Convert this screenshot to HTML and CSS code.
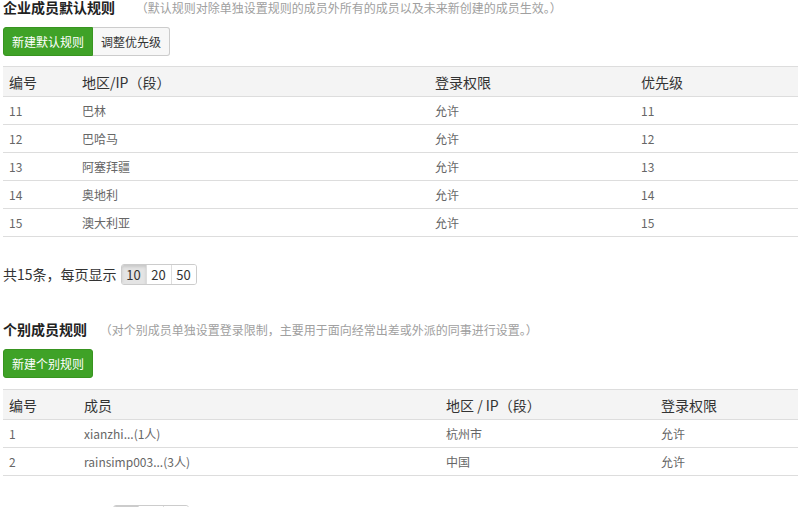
FILE: index.html
```html
<!DOCTYPE html>
<html>
<head>
    <meta charset="utf-8">
    <title>登录限制</title>
    <link rel="stylesheet" href="styles.css">
</head>
<body>
    <div class="page">
        <div class="section">
            <div class="section-title">
                <span class="title">企业成员默认规则</span>
                <span class="note note-wide">（默认规则对除单独设置规则的成员外所有的成员以及未来新创建的成员生效。）</span>
            </div>
            <div class="toolbar">
                <span class="btn btn-green btn-left">新建默认规则</span><span class="btn btn-default btn-right">调整优先级</span>
            </div>
            <table class="grid">
                <tr class="grid-head">
                    <td class="c1-id">编号</td>
                    <td class="c1-area">地区/IP（段）</td>
                    <td class="c1-perm">登录权限</td>
                    <td>优先级</td>
                </tr>
                <tr><td>11</td><td>巴林</td><td>允许</td><td>11</td></tr>
                <tr><td>12</td><td>巴哈马</td><td>允许</td><td>12</td></tr>
                <tr><td>13</td><td>阿塞拜疆</td><td>允许</td><td>13</td></tr>
                <tr><td>14</td><td>奥地利</td><td>允许</td><td>14</td></tr>
                <tr><td>15</td><td>澳大利亚</td><td>允许</td><td>15</td></tr>
            </table>
            <div class="pager">
                <span>共15条，每页显示</span>
                <span class="size-group"><span class="size active">10</span><span class="size">20</span><span class="size">50</span></span>
            </div>
        </div>

        <div class="section section-2">
            <div class="section-title">
                <span class="title">个别成员规则</span>
                <span class="note">（对个别成员单独设置登录限制，主要用于面向经常出差或外派的同事进行设置。）</span>
            </div>
            <div class="toolbar">
                <span class="btn btn-green">新建个别规则</span>
            </div>
            <table class="grid">
                <tr class="grid-head">
                    <td class="c2-id">编号</td>
                    <td class="c2-member">成员</td>
                    <td class="c2-area">地区 / IP（段）</td>
                    <td>登录权限</td>
                </tr>
                <tr><td>1</td><td>xianzhi...(1人)</td><td>杭州市</td><td>允许</td></tr>
                <tr><td>2</td><td>rainsimp003...(3人)</td><td>中国</td><td>允许</td></tr>
            </table>
            <div class="pager pager-2">
                <span>共2条，每页显示</span>
                <span class="size-group"><span class="size active">10</span><span class="size">20</span><span class="size">50</span></span>
            </div>
        </div>
    </div>
</body>
</html>
```

FILE: styles.css
```css
html, body {
    margin: 0;
    padding: 0;
    background: #ffffff;
}

body {
    font-family: "Microsoft YaHei", "Noto Sans CJK SC", "Open Sans", sans-serif;
    font-size: 12px;
    color: #333333;
    overflow: hidden;
}

.page {
    margin-top: -3px;
    padding: 0 0 0 3px;
    width: 800px;
}

.section-title {
    height: 20px;
    line-height: 20px;
    white-space: nowrap;
}

.title {
    font-size: 14px;
    font-weight: bold;
    color: #222222;
}

.note {
    margin-left: 10px;
    font-size: 12px;
    color: #a0a0a0;
}

.note-wide {
    margin-left: 18px;
}

.toolbar {
    margin-top: 10px;
    height: 29px;
    display: flex;
}

.btn {
    display: inline-block;
    box-sizing: border-box;
    height: 29px;
    line-height: 27px;
    padding: 0 8px;
    font-size: 12px;
    border: 1px solid transparent;
    border-radius: 3px;
}

.btn-green {
    background: #3fa227;
    border-color: #389420;
    color: #ffffff;
}

.btn-default {
    background: #f7f7f7;
    border-color: #cccccc;
    color: #333333;
}

.btn-left {
    border-top-right-radius: 0;
    border-bottom-right-radius: 0;
}

.btn-right {
    border-left: none;
    border-top-left-radius: 0;
    border-bottom-left-radius: 0;
}

.grid {
    margin-top: 10px;
    width: 800px;
    border-collapse: collapse;
    table-layout: fixed;
}

.grid td {
    height: 27px;
    padding: 0 0 0 6px;
    border-bottom: 1px solid #dddddd;
    color: #666666;
    font-size: 12px;
    white-space: nowrap;
}

.grid-head td {
    height: 29px;
    background: #f4f4f4;
    border-top: 1px solid #dddddd;
    color: #333333;
    font-size: 14px;
}

.c1-id { width: 67px; }
.c1-area { width: 347px; }
.c1-perm { width: 200px; }

.c2-id { width: 69px; }
.c2-member { width: 356px; }
.c2-area { width: 209px; }

.pager {
    margin-top: 26px;
    height: 22px;
    display: flex;
    align-items: center;
    font-size: 14px;
    color: #333333;
}

.pager-2 {
    margin-top: 28px;
}

.size-group {
    display: inline-flex;
    margin-left: 4px;
    border: 1px solid #cccccc;
    border-radius: 3px;
    overflow: hidden;
}

.size {
    display: inline-block;
    width: 24px;
    height: 19px;
    line-height: 19px;
    text-align: center;
    font-size: 13px;
    background: #ffffff;
    border-left: 1px solid #dddddd;
}

.size:first-child {
    border-left: none;
}

.size.active {
    background: #e4e4e4;
    box-shadow: inset 0 2px 3px rgba(0, 0, 0, 0.12);
}

.section-2 {
    margin-top: 34px;
}

.section-2 .grid {
    margin-top: 11px;
}
```
